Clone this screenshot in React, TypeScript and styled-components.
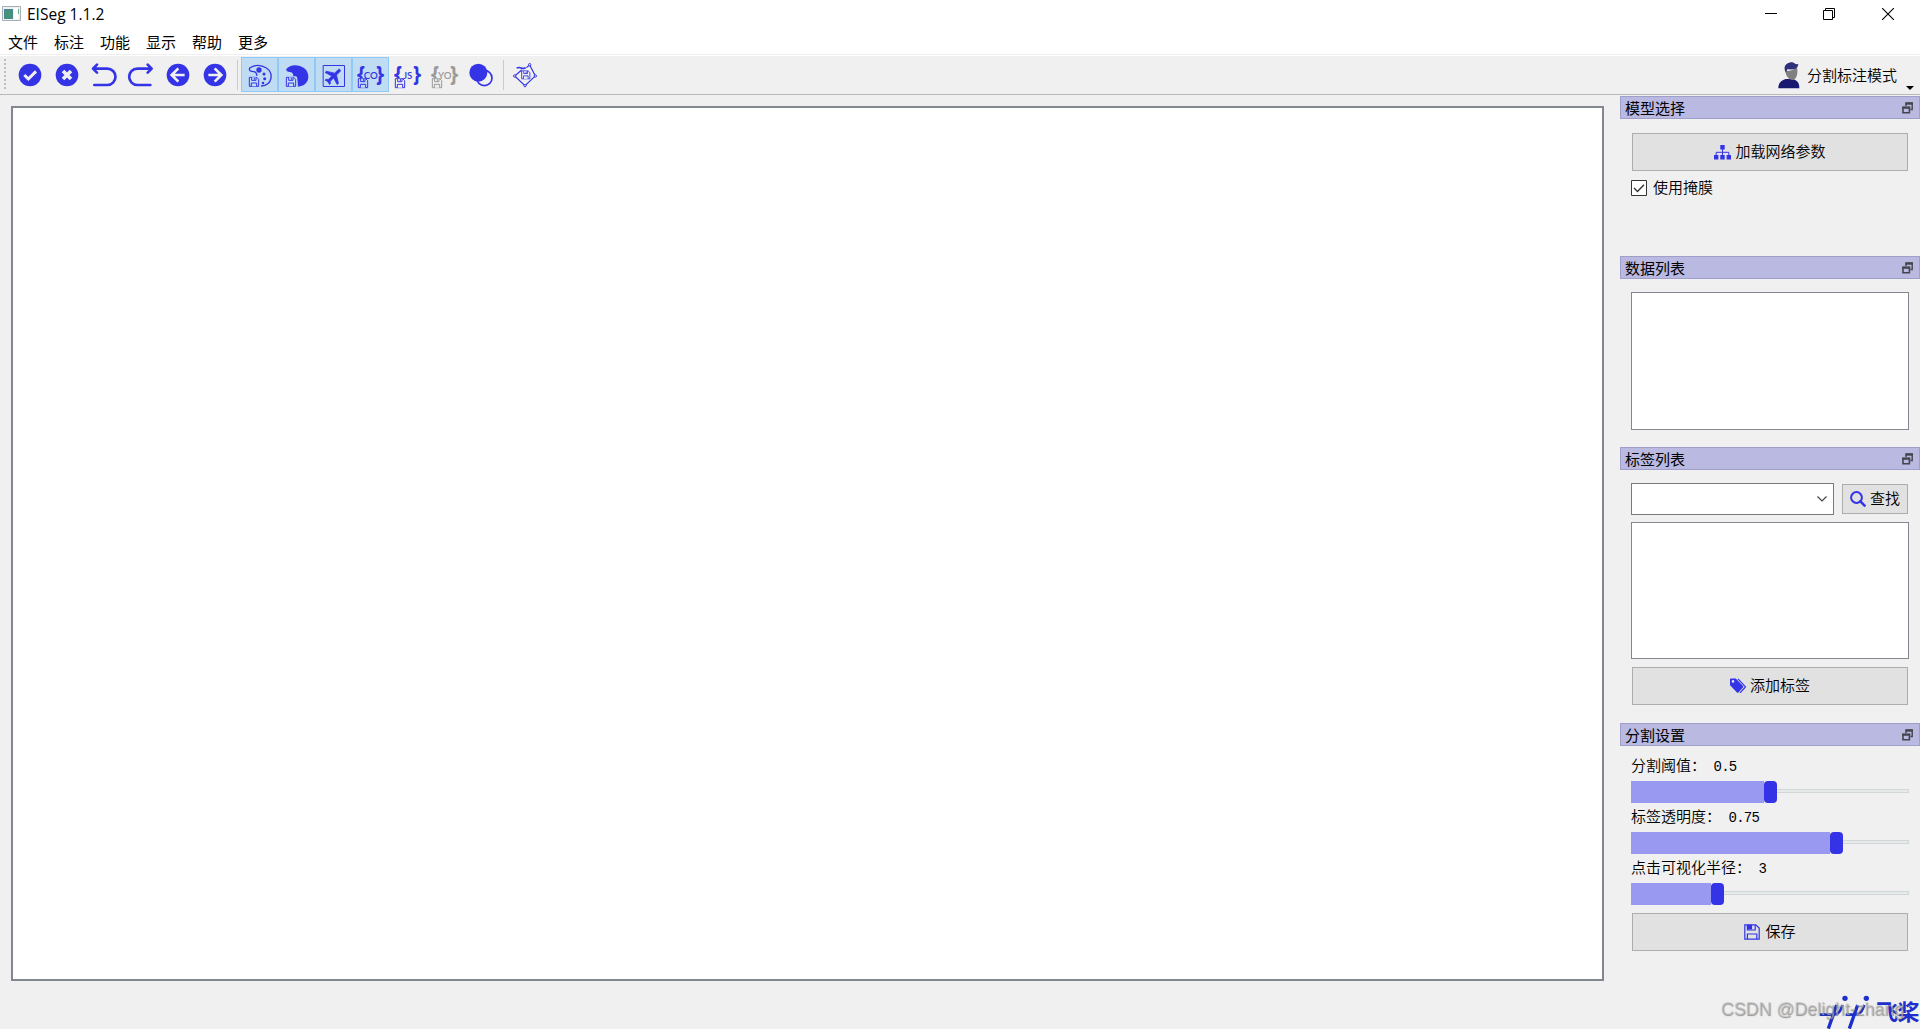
import { ReactNode, useState } from 'react';
import styled, { createGlobalStyle } from 'styled-components';

const BLUE = '#3434e6';

const GlobalStyle = createGlobalStyle`
  * {
    box-sizing: border-box;
  }
  body {
    margin: 0;
    background-color: #f0f0f0;
    overflow: hidden;
    color: #000;
    font-family: 'Noto Sans CJK SC', sans-serif;
    font-size: 15px;
  }
  svg {
    display: block;
    flex: none;
  }
`;

const Window = styled.div`
  width: 1920px;
  height: 1029px;
  display: flex;
  flex-direction: column;
  position: relative;
  overflow: hidden;
  background-color: #f0f0f0;
`;

const TitleBar = styled.header`
  height: 28px;
  display: flex;
  align-items: center;
  padding-left: 2px;
  background-color: white;
`;

const AppTitle = styled.span`
  margin-left: 6px;
  flex: 1;
  font-family: 'Open Sans', sans-serif;
  font-size: 15.5px;
  line-height: 28px;
`;

const WindowButtons = styled.div`
  display: flex;
  gap: 46px;
  margin-right: 26px;
`;

const MenuBar = styled.nav`
  height: 28px;
  display: flex;
  gap: 16px;
  padding: 0 8px 2px;
  background-color: white;
  border-bottom: 1px solid white;
  box-shadow: inset 0 -1px 0 #efefef;
`;

const MenuItem = styled.span`
  width: 30px;
  line-height: 27px;
  height: 26px;
  white-space: nowrap;
`;

const ToolBar = styled.div`
  height: 39px;
  display: flex;
  padding-top: 1px;
  border-bottom: 1px solid #b8b8b8;
`;

const Grip = styled.div`
  width: 2px;
  height: 31px;
  margin: 2px 6px 0 4px;
  background: repeating-linear-gradient(#bdbdbd 0 2px, transparent 2px 4px);
`;

const ToolButton = styled.button<{ $checked?: boolean }>`
  width: 37px;
  height: 35px;
  padding: 0;
  border: none;
  background-color: ${(props) => (props.$checked ? '#c0dcf3' : 'transparent')};
  box-shadow: ${(props) => (props.$checked ? 'inset 0 0 0 1px #90c8f6' : 'none')};
`;

const Separator = styled.div`
  width: 1px;
  height: 30px;
  margin: 3px 3px 0;
  background-color: #cbcbcb;
`;

const ModeButton = styled.div`
  margin-left: auto;
  width: 142px;
  height: 36px;
  display: flex;
  align-items: center;
  font-weight: 350;
`;

const ModeText = styled.span`
  margin-left: 7px;
  width: 99px;
  padding-bottom: 2px;
  white-space: nowrap;
`;

const MenuArrow = styled.i`
  align-self: flex-end;
  margin: 0 0 3px;
  border: 4px solid transparent;
  border-top-color: black;
  border-bottom: none;
`;

const Workspace = styled.main`
  flex: 1;
  display: flex;
`;

const Canvas = styled.div`
  width: 1593px;
  height: 875px;
  margin: 11px 16px 0 11px;
  border: 2px solid #828790;
  background-color: white;
`;

const Sidebar = styled.aside`
  width: 300px;
  padding-top: 1px;
`;

const Dock = styled.section<{ $height: number }>`
  height: ${(props) => props.$height}px;
`;

const DockTitle = styled.div`
  height: 23px;
  display: flex;
  align-items: center;
  justify-content: space-between;
  padding: 0 6px 0 4px;
  border: 1px solid #9f9fca;
  background-color: #b9b9e2;
  line-height: 21px;
`;

const DockBody = styled.div<{ $top: number }>`
  display: flex;
  flex-direction: column;
  padding: ${(props) => props.$top}px 11px 0;
`;

const PushButton = styled.button<{ $width?: number; $height?: number; $gap?: number }>`
  width: ${(props) => props.$width ?? 276}px;
  height: ${(props) => props.$height ?? 38}px;
  margin: 0 1px;
  padding: 0;
  display: flex;
  align-items: center;
  justify-content: center;
  gap: ${(props) => props.$gap ?? 4}px;
  border: 1px solid #adadad;
  background-color: #e1e1e1;
  color: black;
  font-family: inherit;
  font-size: 15px;
  font-weight: 350;
`;

const ButtonText = styled.span`
  padding-bottom: 3px;
  line-height: 22px;
`;

const CheckRow = styled.label`
  display: flex;
  align-items: center;
  height: 16px;
  margin-top: 9px;
  gap: 6px;
  font-weight: 350;
`;

const ListBox = styled.div<{ $height: number }>`
  height: ${(props) => props.$height}px;
  border: 1px solid #828790;
  background-color: white;
`;

const ActionRow = styled.div`
  padding-top: 8px;
`;

const SearchRow = styled.div`
  display: flex;
  align-items: center;
  gap: 7px;
  margin-bottom: 7px;
`;

const ComboBox = styled.div`
  width: 203px;
  height: 32px;
  display: flex;
  align-items: center;
  justify-content: flex-end;
  padding-right: 6px;
  border: 1px solid #7a7a7a;
  background-color: white;
`;

const SliderLabel = styled.div`
  height: 29px;
  line-height: 26px;
  font-weight: 350;
  white-space: pre;
`;

const SliderValue = styled.span`
  font-family: 'Liberation Mono', monospace;
  font-size: 14px;
  letter-spacing: -0.8px;
`;

const Slider = styled.div`
  height: 22px;
  display: flex;
  align-items: center;
`;

const SliderFill = styled.div`
  height: 22px;
  background-color: #9999f1;
`;

const SliderHandle = styled.div`
  width: 13px;
  height: 22px;
  border-radius: 4px;
  background-color: ${BLUE};
`;

const SliderGroove = styled.div`
  flex: 1;
  height: 4px;
  margin-bottom: 2px;
  border: 1px solid #d1d6d6;
  border-left: none;
  background-color: #e7eaea;
`;

const Brand = styled.div`
  position: absolute;
  right: 1px;
  bottom: 0;
  display: flex;
  color: #1d2fcd;
`;

const BrandName = styled.span`
  width: 43px;
  height: 34px;
  font-size: 22px;
  font-weight: 700;
  line-height: 31px;
  letter-spacing: -0.5px;
  white-space: nowrap;
`;

const Watermark = styled.div`
  position: absolute;
  left: 1721px;
  top: 998px;
  font-family: 'Liberation Sans', sans-serif;
  font-size: 17.8px;
  line-height: 22px;
  white-space: nowrap;
  color: rgba(190, 190, 190, 0.6);
  text-shadow: 0.6px 0.6px 1px rgba(80, 80, 80, 0.6);
`;

// toolbar icons share one grid, three units for each pixel of the button
const ToolIcon = ({ children }: { children: ReactNode }) => (
  <svg width='37' height='35' viewBox='0 0 111 105' fill='none' stroke={BLUE}>
    {children}
  </svg>
);

const Disc = () => <circle cx='54' cy='54' r='34' fill={BLUE} stroke='none' />;

const Floppy = ({ color = BLUE, bg = '#c0dcf3' }: { color?: string; bg?: string }) => (
  <g stroke={color} strokeWidth='3' fill={bg}>
    <path d='M25 61h22l6 6v21H25z' />
    <path d='M32 61v9h13v-9M31 88V78h16v10' />
    <path d='M40 62v6' />
  </g>
);

const JsonIcon = ({ label, color = BLUE, bg }: { label: string; color?: string; bg?: string }) => (
  <ToolIcon>
    <g fill={color} stroke='none' fontFamily='Open Sans' textAnchor='middle'>
      <text x='27' y='73' fontSize='62' fontWeight='700'>
        {'{'}
      </text>
      <text x='84' y='73' fontSize='62' fontWeight='700'>
        {'}'}
      </text>
      <text x='56' y='65' fontSize='29' fontWeight='600' fontFamily='Lato'>
        {label}
      </text>
    </g>
    <g transform='translate(-6 4)'>
      <Floppy color={color} bg={bg} />
    </g>
  </ToolIcon>
);

const FloatIcon = () => (
  <svg width='11' height='12' viewBox='0 0 11 12' fill='none' stroke='#45454d'>
    <path d='M4 4V1.5h6.2V7.5H8.5' strokeWidth='1.4' />
    <path d='M3.4 1.4h7.5' strokeWidth='2.4' />
    <path d='M1 5.5h6.4v5.2H1z' strokeWidth='1.6' />
    <path d='M.2 5.6h8' strokeWidth='2.2' />
  </svg>
);

const SaveIcon = () => (
  <svg width='16' height='16' viewBox='0 0 16 16' fill='none' stroke={BLUE} strokeWidth='1.2'>
    <path d='M.8.8h11L15.2 4v11.2H.8z' />
    <path d='M3.4 1v5h7.8V1M3.4 15v-5h9.4v5' />
    <path d='M4 1.4h3.5V5H4z' fill={BLUE} />
  </svg>
);

const UserIcon = () => (
  <svg width='22' height='27' viewBox='0 0 66 81'>
    <path d='M1 79c0-17 9-24 23-28l20 0c13 4 20 10 20 28z' fill='#191970' />
    <path d='M23 27q18 2 34-12c3 14 1 26-4 33-5 8-15 8-21 1-6-6-10-14-9-22z' fill='#808080' />
    <path d='M24 32C15 17 21 4 34 2c6-2 14-1 18 4l9 1c-1 6-4 11-9 13-8 3-17 2-24 2z' fill='#30307c' />
  </svg>
);

const actions = [
  {
    name: 'finish',
    icon: (
      <>
        <Disc />
        <path d='M37 54l12 12 23-23' stroke='#f0f0f0' strokeWidth='9' />
      </>
    ),
  },
  {
    name: 'clear',
    icon: (
      <>
        <Disc />
        <path d='M42 42l24 24M66 42L42 66' stroke='#f0f0f0' strokeWidth='11' />
      </>
    ),
  },
  {
    name: 'undo',
    icon: (
      <path
        d='M33 23L21 35l12 12M22 35h42a24.5 24.5 0 0 1 0 49H25'
        strokeWidth='8'
        strokeLinecap='round'
        strokeLinejoin='round'
      />
    ),
  },
  {
    name: 'redo',
    icon: (
      <path
        d='M74 23l12 12-12 12M85 35H43a24.5 24.5 0 0 0 0 49h39'
        strokeWidth='8'
        strokeLinecap='round'
        strokeLinejoin='round'
      />
    ),
  },
  {
    name: 'prev',
    icon: (
      <>
        <Disc />
        <path d='M55 34L35 54l20 20M37 54h37' stroke='#f0f0f0' strokeWidth='8' />
      </>
    ),
  },
  {
    name: 'next',
    icon: (
      <>
        <Disc />
        <path d='M53 34l20 20-20 20M71 54H34' stroke='#f0f0f0' strokeWidth='8' />
      </>
    ),
  },
];

const settings = [
  { label: '分割阈值：', value: ' 0.5', fill: 133 },
  { label: '标签透明度：', value: ' 0.75', fill: 199 },
  { label: '点击可视化半径：', value: ' 3', fill: 80 },
];

const Panel = ({
  title,
  height,
  top,
  children,
}: {
  title: string;
  height: number;
  top: number;
  children: ReactNode;
}) => (
  <Dock $height={height}>
    <DockTitle>
      {title}
      <FloatIcon />
    </DockTitle>
    <DockBody $top={top}>{children}</DockBody>
  </Dock>
);

export default function App() {
  const [useMask, setUseMask] = useState(true);

  return (
    <Window>
      <GlobalStyle />
      <TitleBar>
        <svg width='19' height='16' viewBox='0 0 19 16'>
          <path d='M.5.5h18v14H.5z' fill='#eef2f4' stroke='#a7adb2' />
          <path d='M2 3h9v10H2z' fill='#4a8792' />
          <path d='M4 5h5v7H4z' fill='#459475' />
          <path d='M12 2h4v11h-4z' fill='#fff' />
          <path d='M16 3h1v5h-1z' fill='#62b58b' />
        </svg>
        <AppTitle>EISeg 1.1.2</AppTitle>
        <WindowButtons>
          <svg width='12' height='12' stroke='black'>
            <path d='M0 5.5h12' />
          </svg>
          <svg width='13' height='12' fill='none' stroke='black'>
            <path d='M.5 2.5h9v9h-9zM2.5 2V.5h9v9H10' />
          </svg>
          <svg width='12' height='12' stroke='black' strokeWidth='1.1'>
            <path d='M0 0l12 12M12 0L0 12' />
          </svg>
        </WindowButtons>
      </TitleBar>

      <MenuBar>
        {['文件', '标注', '功能', '显示', '帮助', '更多'].map((item) => (
          <MenuItem key={item}>{item}</MenuItem>
        ))}
      </MenuBar>

      <ToolBar>
        <Grip />
        {actions.map((action) => (
          <ToolButton key={action.name}>
            <ToolIcon>{action.icon}</ToolIcon>
          </ToolButton>
        ))}
        <Separator />
        <ToolButton $checked>
          <ToolIcon>
            <path
              d='M60 87C97 85 97 46 76 33 59 22 40 24 26 33c-3 7 3 11 12 11 9 0 8 6 10 12'
              strokeWidth='4'
            />
            <g fill={BLUE} stroke='none'>
              <circle cx='54' cy='39' r='8' />
              <circle cx='69' cy='51' r='4.5' />
              <circle cx='71' cy='65' r='4.5' />
              <circle cx='66' cy='78' r='4' />
            </g>
            <Floppy />
          </ToolIcon>
        </ToolButton>
        <ToolButton $checked>
          <ToolIcon>
            <path
              d='M60 89C98 86 97 48 79 34 60 19 35 23 25 36c-2 5 3 9 11 9 8 1 10 6 10 13h9l3 6z'
              fill={BLUE}
              stroke='none'
            />
            <Floppy />
          </ToolIcon>
        </ToolButton>
        <ToolButton $checked>
          <ToolIcon>
            <path d='M24.5 25.5h64v63h-64z' strokeWidth='3' />
            <path
              transform='translate(56 57) rotate(45) scale(2.7) translate(-11.5 -12)'
              d='M21 16v-2l-8-5V3.5c0-.83-.67-1.5-1.5-1.5S10 2.67 10 3.5V9l-8 5v2l8-2.5V19l-2 1.5V22l3.5-1 3.5 1v-1.5L13 19v-5.5l8 2.5z'
              fill={BLUE}
              strokeWidth='0.8'
            />
          </ToolIcon>
        </ToolButton>
        <ToolButton $checked>
          <JsonIcon label='CO' />
        </ToolButton>
        <ToolButton>
          <JsonIcon label='JS' bg='#f0f0f0' />
        </ToolButton>
        <ToolButton>
          <JsonIcon label='YO' color='#9a9a9a' bg='#f0f0f0' />
        </ToolButton>
        <ToolButton>
          <ToolIcon>
            <circle cx='64' cy='63' r='23' strokeWidth='5' />
            <circle cx='46' cy='47' r='27' fill={BLUE} stroke='none' />
          </ToolIcon>
        </ToolButton>
        <Separator />
        <ToolButton>
          <ToolIcon>
            <path d='M23 57l31 29 31-29-17-33-10 8M44 39L23 57' strokeWidth='3.5' />
            <path d='M29 33q8-3 13 0t14-1' strokeWidth='5' />
            <g fill='#f0f0f0' strokeWidth='3'>
              <circle cx='23' cy='57' r='3.5' />
              <circle cx='54' cy='86' r='3.5' />
              <circle cx='85' cy='57' r='3.5' />
              <circle cx='68' cy='23' r='3.5' />
            </g>
            <g transform='translate(22 -12) scale(.88)'>
              <Floppy bg='#f0f0f0' />
            </g>
          </ToolIcon>
        </ToolButton>
        <ModeButton>
          <UserIcon />
          <ModeText>分割标注模式</ModeText>
          <MenuArrow />
        </ModeButton>
      </ToolBar>

      <Workspace>
        <Canvas />
        <Sidebar>
          <Panel title='模型选择' height={160} top={14}>
            <PushButton>
              <svg width='17' height='15' viewBox='0 0 17 15' fill={BLUE}>
                <path d='M6.3 0h4.4v4.4H6.3zM0 10h4.4v4.6H0zM6.3 10h4.4v4.6H6.3zM12.6 10H17v4.6h-4.4z' />
                <path d='M2.2 10V7.3h12.6V10M8.5 4v6' fill='none' stroke={BLUE} />
              </svg>
              <ButtonText>加载网络参数</ButtonText>
            </PushButton>
            <CheckRow onClick={() => setUseMask(!useMask)}>
              <svg width='16' height='16' fill='white' stroke='#333'>
                <path d='M.5.5h15v15H.5z' />
                {useMask && <path d='M3 8l3.5 3.5L13 4.8' fill='none' strokeWidth='1.4' />}
              </svg>
              <ButtonText>使用掩膜</ButtonText>
            </CheckRow>
          </Panel>

          <Panel title='数据列表' height={191} top={13}>
            <ListBox $height={138} />
          </Panel>

          <Panel title='标签列表' height={276} top={13}>
            <SearchRow>
              <ComboBox>
                <svg width='10' height='6' fill='none' stroke='#444' strokeWidth='1.2'>
                  <path d='M.5.5L5 5 9.5.5' />
                </svg>
              </ComboBox>
              <PushButton $width={66} $height={30}>
                <svg width='16' height='16' viewBox='0 0 16 16' fill='none' stroke={BLUE}>
                  <circle cx='6.5' cy='6.5' r='5.4' strokeWidth='2' />
                  <path d='M10.4 10.4l4.2 4.2' strokeWidth='2.6' strokeLinecap='round' />
                </svg>
                <ButtonText>查找</ButtonText>
              </PushButton>
            </SearchRow>
            <ListBox $height={137} />
            <ActionRow>
              <PushButton>
                <svg width='16' height='16' viewBox='0 0 16 16' fill={BLUE}>
                  <path
                    fillRule='evenodd'
                    d='M0 1.2Q0 .5.8.5h5L13 8.1q.7.7 0 1.4L8.4 14.6q-.7.7-1.4 0L0 7.2zM3 2.1a1.3 1.3 0 1 0 0 2.6 1.3 1.3 0 0 0 0-2.6z'
                  />
                  <path d='M8 .8l7 7.5q.7.6 0 1.2L10 14.8' fill='none' stroke={BLUE} strokeWidth='1.2' />
                </svg>
                <ButtonText>添加标签</ButtonText>
              </PushButton>
            </ActionRow>
          </Panel>

          <Panel title='分割设置' height={228} top={6}>
            {settings.map((item) => (
              <div key={item.label}>
                <SliderLabel>
                  {item.label}
                  <SliderValue>{item.value}</SliderValue>
                </SliderLabel>
                <Slider>
                  <SliderFill style={{ width: item.fill }} />
                  <SliderHandle />
                  <SliderGroove />
                </Slider>
              </div>
            ))}
            <ActionRow>
              <PushButton $gap={5}>
                <SaveIcon />
                <ButtonText>保存</ButtonText>
              </PushButton>
            </ActionRow>
          </Panel>
        </Sidebar>
      </Workspace>

      <Brand>
        <svg width='57' height='34' viewBox='0 0 171 102' fill='none' stroke='#1d2fcd' strokeWidth='10'>
          <path d='M28 101L53 30M91 101l25-71' />
          <path d='M3 59h40c15 0 20-8 28-29M80 59h26c17 0 22-8 30-29' strokeWidth='8' />
          <circle cx='78' cy='10' r='8' fill='#1d2fcd' stroke='none' />
          <circle cx='142' cy='10' r='8' fill='#1d2fcd' stroke='none' />
        </svg>
        <BrandName>飞桨</BrandName>
      </Brand>
      <Watermark>CSDN @Delight-zhang</Watermark>
    </Window>
  );
}
